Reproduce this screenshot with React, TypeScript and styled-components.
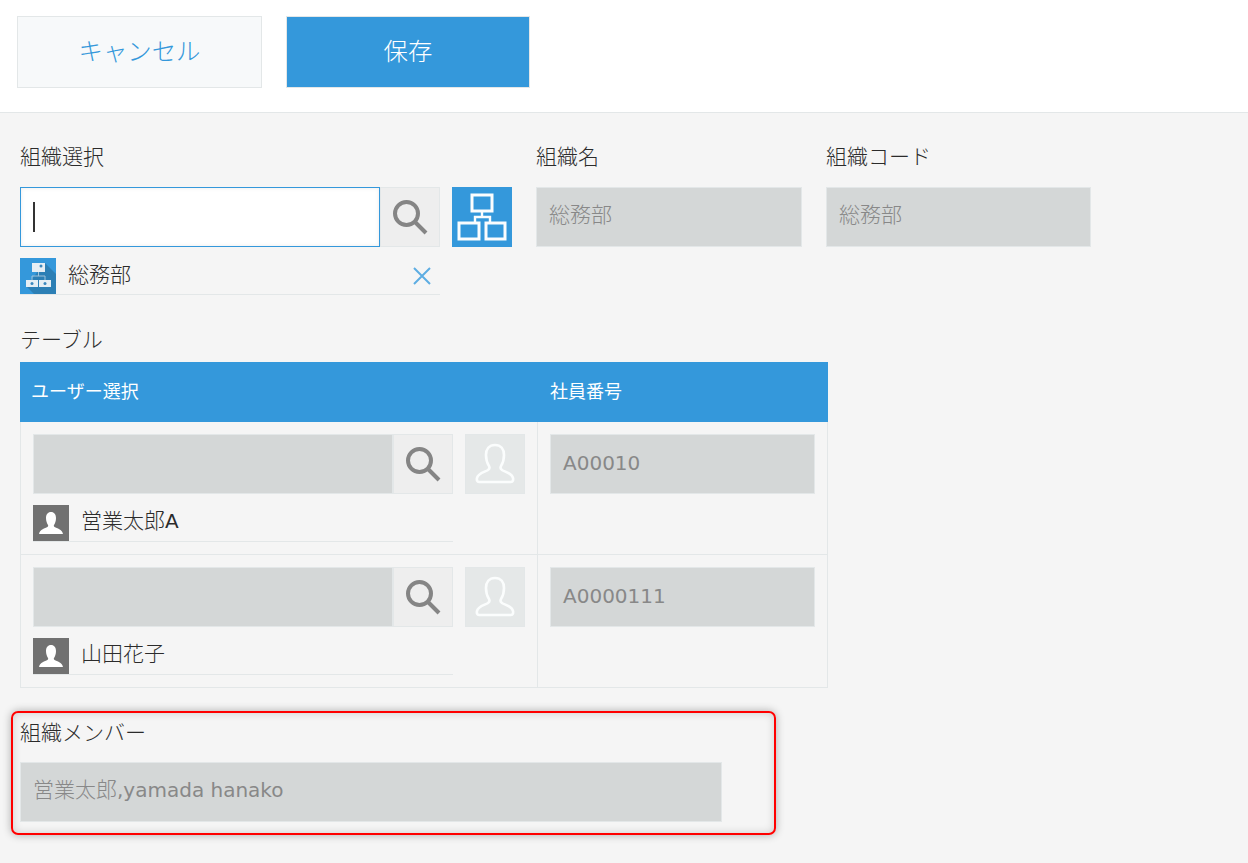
import React from 'react';
import styled, { createGlobalStyle } from 'styled-components';

const BLUE = '#3498db';
const FONT = `'DejaVu Sans', 'Noto Sans CJK JP', sans-serif`;

const GlobalStyle = createGlobalStyle`
  html, body {
    margin: 0;
    padding: 0;
    background: #f5f5f5;
  }
  body {
    font-family: ${FONT};
    color: #2b2b2b;
    overflow: hidden;
  }
  * {
    box-sizing: border-box;
  }
`;

const Page = styled.div`
  width: 1248px;
  height: 863px;
  overflow: hidden;
`;

const Toolbar = styled.div`
  display: flex;
  gap: 24px;
  height: 113px;
  padding: 16px 0 0 17px;
  background: #fff;
  border-bottom: 1px solid #e3e7e8;
`;

const ActionButton = styled.button<{ $primary?: boolean }>`
  width: ${({ $primary }) => ($primary ? '244px' : '245px')};
  height: 72px;
  padding: 0 0 6px;
  border: 1px solid #e3e7e8;
  background: ${({ $primary }) => ($primary ? BLUE : '#f7f9fa')};
  color: ${({ $primary }) => ($primary ? '#fff' : BLUE)};
  font-family: ${FONT};
  font-weight: 300;
  font-size: 24.4px;
`;

const Content = styled.div`
  padding: 27px 0 0 20px;
`;

const TopRow = styled.div`
  display: flex;
  align-items: flex-start;
  height: 183px;
`;

const Field = styled.div<{ $width: number }>`
  width: ${({ $width }) => $width}px;
  flex: none;
`;

const Label = styled.div`
  height: 30px;
  margin-bottom: 17px;
  font-family: ${FONT};
  font-weight: 300;
  font-size: 21px;
  line-height: 34px;
  color: #2b2b2b;
  white-space: nowrap;
`;

const Lookup = styled.div`
  display: flex;
`;

const LookupInput = styled.div`
  display: flex;
  align-items: center;
  width: 360px;
  height: 60px;
  padding-left: 12px;
  background: #fff;
  border: 1px solid ${BLUE};
  box-shadow: inset 0 0 4px rgba(0, 0, 0, 0.08);
`;

const Caret = styled.span`
  display: block;
  width: 2px;
  height: 30px;
  background: #333;
`;

const ReadonlyBox = styled.div<{ $width: number; $lift?: number }>`
  display: flex;
  align-items: center;
  width: ${({ $width }) => $width}px;
  height: 60px;
  padding: 0 0 ${({ $lift }) => $lift ?? 8}px 12px;
  background: #d4d7d7;
  border: 1px solid #e3e7e8;
  font-weight: 300;
  font-size: 21px;
  color: #888;
  white-space: pre;
`;

const Latin = styled.span`
  font-size: 20px;
  font-weight: 400;
`;

const SquareButton = styled.div<{ $tone: 'search' | 'blue' | 'disabled' }>`
  display: flex;
  align-items: center;
  justify-content: center;
  width: 60px;
  height: 60px;
  flex: none;
  margin-left: ${({ $tone }) => ($tone === 'search' ? 0 : '12px')};
  background: ${({ $tone }) =>
    $tone === 'blue' ? BLUE : $tone === 'disabled' ? '#e5e8e8' : '#eee'};
  border: 1px solid ${({ $tone }) => ($tone === 'blue' ? BLUE : '#e3e7e8')};
`;

const Selected = styled.div<{ $width: number }>`
  display: flex;
  align-items: center;
  width: ${({ $width }) => $width}px;
  height: 37px;
  margin-top: 11px;
  border-bottom: 1px solid #e3e7e8;
  font-weight: 300;
  font-size: 21px;
  color: #2b2b2b;
`;

const SelectedName = styled.span`
  flex: 1;
  margin: 0 0 7px 12px;
`;

const RowName = styled(SelectedName)`
  margin-bottom: 9px;
`;

const NameSuffix = styled.span`
  font-weight: 400;
  font-size: 20px;
`;

const SelectedIcon = styled.div<{ $tone: 'org' | 'user' }>`
  display: flex;
  align-items: center;
  justify-content: center;
  width: 36px;
  height: 36px;
  flex: none;
  background: ${({ $tone }) => ($tone === 'org' ? BLUE : '#717171')};
`;

const RemoveButton = styled.div`
  display: flex;
  margin-right: 8px;
`;

const TableLabel = styled(Label)`
  margin-bottom: 9px;
`;

const Table = styled.div`
  width: 808px;
  display: grid;
  grid-template-columns: 518px 290px;
`;

const HeaderCell = styled.div<{ $last?: boolean }>`
  display: flex;
  align-items: center;
  height: 60px;
  padding: 0 0 4px ${({ $last }) => ($last ? '12px' : '11px')};
  background: ${BLUE};
  color: #fff;
  font-weight: 400;
  font-size: 18px;
`;

const Cell = styled.div<{ $last?: boolean }>`
  height: 133px;
  padding: 12px 0 0 12px;
  border-bottom: 1px solid #e3e7e8;
  border-left: ${({ $last }) => ($last ? 'none' : '1px solid #e3e7e8')};
  border-right: 1px solid #e3e7e8;
`;

const Annotation = styled.section`
  width: 765px;
  height: 124px;
  margin: 23px 0 0 -9px;
  padding: 3px 0 0 7px;
  border: 2px solid #f00;
  border-radius: 7px;
  box-shadow: 0 0 8px rgba(0, 0, 0, 0.3), inset 0 0 8px rgba(0, 0, 0, 0.16);
`;

const AnnotationLabel = styled(Label)`
  margin-bottom: 16px;
`;

const SearchIcon = () => (
  <svg width="36" height="36" viewBox="0 0 36 36" fill="none" stroke="#858585">
    <circle cx="14.5" cy="14.5" r="11.500" strokeWidth="4" />
    <path d="M23 23l11 11" strokeWidth="4" />
  </svg>
);

const OrgIcon = () => (
  <svg width="58" height="58" viewBox="1 1 58 58" fill="none" stroke="#fbfdfe" strokeWidth="3">
    <rect x="20" y="8" width="20" height="16" />
    <path d="M30 24v6M23 35v-5h15v5" strokeWidth="2.400" />
    <rect x="7" y="36" width="20" height="16" />
    <rect x="34" y="36" width="19" height="16" />
  </svg>
);

const SmallOrgIcon = () => (
  <svg width="36" height="36" viewBox="0 0 36 36">
    <path d="M25 5l11 11v20H14l-8-8z" fill="#2c7fb5" />
    <path d="M18.500 14v4M12 22v-4h13v4" fill="none" stroke="#9fc3da" strokeWidth="1" />
    <rect x="12" y="5" width="13" height="9" fill="#e6eef4" />
    <circle cx="21" cy="8" r="1.500" fill="#3a87bd" />
    <rect x="6" y="22" width="12" height="7" fill="#e6eef4" />
    <circle cx="12" cy="25.500" r="1.500" fill="#3a87bd" />
    <rect x="19" y="22" width="12" height="7" fill="#e6eef4" />
    <circle cx="25" cy="25.500" r="1.500" fill="#3a87bd" />
  </svg>
);

const CloseIcon = () => (
  <svg width="20" height="20" viewBox="0 0 20 20" stroke="#5dade2" strokeWidth="2" fill="none">
    <path d="M2 2l16 16M18 2L2 18" />
  </svg>
);

const PersonOutline = () => (
  <svg width="46" height="46" viewBox="0 0 46 46" fill="none" stroke="#fbfdfd" strokeWidth="2.600">
    <path d="M23 4c-6 0-9 4.500-9 10 0 4 1 8 3 11 .8 1.500.5 3-1 4-3 2-10 3-11 8-.4 2 0 4 2 4h32c2 0 2.400-2 2-4-1-5-8-6-11-8-1.500-1-1.800-2.500-1-4 2-3 3-7 3-11 0-5.500-3-10-9-10z" />
  </svg>
);

const PersonSolid = () => (
  <svg width="26" height="26" viewBox="0 0 26 26" fill="#fff">
    <path d="M13 2c-3.200 0-5 2.500-5 6 0 3 1 5.500 2 7 .4.800.2 1.500-.6 2C7 18.500 2 19 1 24h24c-1-5-6-5.500-8.400-7-.8-.5-1-1.200-.6-2 1-1.500 2-4 2-7 0-3.500-1.800-6-5-6z" />
  </svg>
);

const rows = [
  { name: '営業太郎', suffix: 'A', code: 'A00010' },
  { name: '山田花子', suffix: '', code: 'A0000111' },
];

export default function App() {
  return (
    <Page>
      <GlobalStyle />
      <Toolbar>
        <ActionButton>キャンセル</ActionButton>
        <ActionButton $primary>保存</ActionButton>
      </Toolbar>
      <Content>
        <TopRow>
          <Field $width={516}>
            <Label>組織選択</Label>
            <Lookup>
              <LookupInput>
                <Caret />
              </LookupInput>
              <SquareButton $tone="search">
                <SearchIcon />
              </SquareButton>
              <SquareButton $tone="blue">
                <OrgIcon />
              </SquareButton>
            </Lookup>
            <Selected $width={420}>
              <SelectedIcon $tone="org">
                <SmallOrgIcon />
              </SelectedIcon>
              <SelectedName>総務部</SelectedName>
              <RemoveButton>
                <CloseIcon />
              </RemoveButton>
            </Selected>
          </Field>
          <Field $width={290}>
            <Label>組織名</Label>
            <ReadonlyBox $width={266}>総務部</ReadonlyBox>
          </Field>
          <Field $width={265}>
            <Label>組織コード</Label>
            <ReadonlyBox $width={265}>総務部</ReadonlyBox>
          </Field>
        </TopRow>
        <TableLabel>テーブル</TableLabel>
        <Table>
          <HeaderCell>ユーザー選択</HeaderCell>
          <HeaderCell $last>社員番号</HeaderCell>
          {rows.map((row) => (
            <React.Fragment key={row.code}>
              <Cell>
                <Lookup>
                  <ReadonlyBox $width={360} />
                  <SquareButton $tone="search">
                    <SearchIcon />
                  </SquareButton>
                  <SquareButton $tone="disabled">
                    <PersonOutline />
                  </SquareButton>
                </Lookup>
                <Selected $width={420}>
                  <SelectedIcon $tone="user">
                    <PersonSolid />
                  </SelectedIcon>
                  <RowName>
                    {row.name}
                    <NameSuffix>{row.suffix}</NameSuffix>
                  </RowName>
                </Selected>
              </Cell>
              <Cell $last>
                <ReadonlyBox $width={265} $lift={2}>
                  <Latin>{row.code}</Latin>
                </ReadonlyBox>
              </Cell>
            </React.Fragment>
          ))}
        </Table>
        <Annotation>
          <AnnotationLabel>組織メンバー</AnnotationLabel>
          <ReadonlyBox $width={702} $lift={8}>
            <span>
              営業太郎<Latin>,yamada hanako</Latin>
            </span>
          </ReadonlyBox>
        </Annotation>
      </Content>
    </Page>
  );
}
